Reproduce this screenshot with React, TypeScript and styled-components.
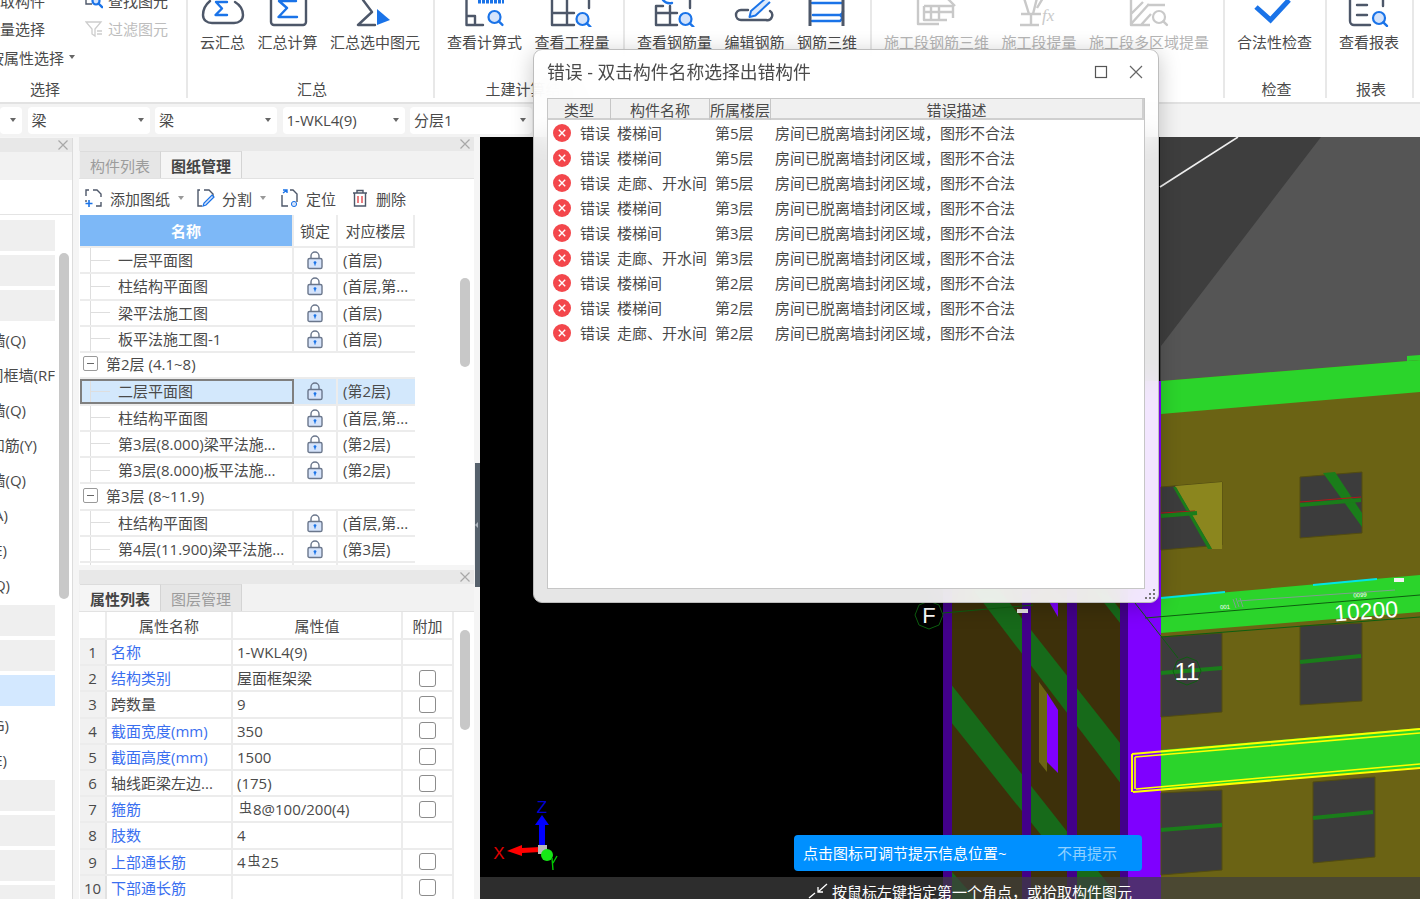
import React from "react";
import styled, { createGlobalStyle } from "styled-components";

const Global = createGlobalStyle`
  html, body { margin: 0; padding: 0; background: #f5f5f5; }
  body { font-family: "Open Sans", "Noto Sans CJK SC", "Noto Sans", sans-serif; font-size: 15px; color: #4a4a4a; }
  * { box-sizing: border-box; }
`;

const GRAY = "#4d5769";
const BLUE = "#1a73e8";
const OFF = "#c9c9c9";

const Page = styled.div`
  position: relative;
  width: 1420px;
  height: 899px;
  overflow: hidden;
  display: flex;
  flex-direction: column;
  background: #f5f5f5;
`;

/* ---------- ribbon ---------- */
const Ribbon = styled.div`
  height: 104px;
  flex: none;
  display: flex;
  background: #fff;
  border-bottom: 2px solid #e2e2e2;
  overflow: hidden;
`;
const Group = styled.div<{ $w?: number }>`
  flex: none;
  width: ${(p) => (p.$w ? `${p.$w}px` : "auto")};
  height: 98px;
  padding: 0 12px;
  display: flex;
  flex-direction: column;
  border-right: 2px solid #e8e8e8;
`;
const SelectGroup = styled(Group)`
  padding: 0;
`;
const GroupBody = styled.div`
  height: 52px;
  flex: none;
  display: flex;
  gap: 12.5px;
`;
const SelectBody = styled.div`
  height: 52px;
  flex: none;
  display: flex;
  align-items: flex-start;
  gap: 7px;
`;
const GroupLabel = styled.div`
  margin-top: auto;
  height: 18px;
  padding-left: 3px;
  line-height: 18px;
  text-align: center;
  white-space: nowrap;
`;
const SelectLabel = styled(GroupLabel)`
  width: 90px;
  padding-left: 0;
`;
const Tool = styled.div<{ $off?: boolean }>`
  display: flex;
  flex-direction: column;
  align-items: center;
  white-space: nowrap;
  color: ${(p) => (p.$off ? "#b5b5b5" : "#4a4a4a")};
`;
const ToolIcon = styled.svg`
  display: block;
  width: 44px;
  height: 27px;
  flex: none;
`;
const ToolText = styled.span`
  margin-top: 6px;
  line-height: 18px;
`;
const SelectCol = styled.div<{ $w: number }>`
  width: ${(p) => p.$w}px;
  flex: none;
  margin-top: -14px;
  display: flex;
  flex-direction: column;
  overflow: hidden;
`;
const SelectRow = styled.div<{ $end?: number; $off?: boolean }>`
  height: 28.5px;
  flex: none;
  display: flex;
  align-items: center;
  justify-content: ${(p) => (p.$end !== undefined ? "flex-end" : "flex-start")};
  padding-right: ${(p) => p.$end ?? 0}px;
  gap: 5px;
  white-space: nowrap;
  color: ${(p) => (p.$off ? "#bdbdbd" : "#4a4a4a")};
  & > span { flex: none; }
`;
const MiniIcon = styled.svg`
  width: 18px;
  height: 18px;
  flex: none;
`;
const Caret = styled.i<{ $c?: string }>`
  display: block;
  flex: none;
  width: 0;
  height: 0;
  border-left: 3.5px solid transparent;
  border-right: 3.5px solid transparent;
  border-top: 4px solid ${(p) => p.$c ?? "#666"};
`;

/* ---------- combo bar ---------- */
const ComboBar = styled.div`
  height: 33px;
  flex: none;
  display: flex;
  align-items: center;
  gap: 5.5px;
  background: #f3f3f3;
`;
const Combo = styled.div<{ $w: number }>`
  width: ${(p) => p.$w}px;
  height: 27px;
  flex: none;
  display: flex;
  align-items: center;
  justify-content: space-between;
  padding: 0 6px 2px 4px;
  background: #fff;
  border-radius: 4px;
  white-space: nowrap;
`;

/* ---------- main ---------- */
const Main = styled.div`
  flex: 1;
  min-height: 0;
  display: flex;
`;
const LeftPane = styled.div`
  width: 73px;
  flex: none;
  margin-top: 1px;
  display: flex;
  flex-direction: column;
  background: #fff;
  border-right: 1px solid #dcdcdc;
  overflow: hidden;
`;
const TitleStrip = styled.div`
  height: 14px;
  flex: none;
  display: flex;
  align-items: center;
  justify-content: flex-end;
  padding-right: 4px;
  background: #e8e8e8;
`;
const CloseMark = styled.svg`
  width: 10px;
  height: 10px;
  flex: none;
`;
const GreyStrip = styled.div`
  height: 28px;
  flex: none;
  background: #f2f2f2;
`;
const BlankStrip = styled.div`
  height: 35px;
  flex: none;
  border-bottom: 1px solid #e4e4e4;
`;
const LeftBody = styled.div`
  display: flex;
  flex: 1;
  min-height: 0;
`;
const LeftList = styled.div`
  width: 55px;
  flex: none;
  padding-top: 5px;
  display: flex;
  flex-direction: column;
  overflow: hidden;
`;
const Block = styled.div<{ $on?: boolean }>`
  height: 31px;
  flex: none;
  margin-bottom: 4px;
  background: ${(p) => (p.$on ? "#d3e8ff" : "#efefef")};
`;
const TextItem = styled.div<{ $end: number }>`
  height: 35px;
  flex: none;
  display: flex;
  align-items: center;
  justify-content: flex-end;
  padding: 0 ${(p) => p.$end}px 7px 0;
  white-space: nowrap;
  & > span { flex: none; }
`;
const LeftTrack = styled.div`
  flex: 1;
  padding: 38px 0 0 4px;
`;
const Thumb = styled.div<{ $h: number; $top?: number; $left?: number }>`
  width: 10px;
  height: ${(p) => p.$h}px;
  margin-top: ${(p) => p.$top ?? 0}px;
  margin-left: ${(p) => p.$left ?? 0}px;
  background: #c8c8c8;
  border-radius: 5px;
`;

const MidCol = styled.div`
  width: 395px;
  flex: none;
  margin-left: 6px;
  display: flex;
  flex-direction: column;
`;
const Panel = styled.div<{ $h: number; $mt?: number }>`
  height: ${(p) => p.$h}px;
  margin-top: ${(p) => p.$mt ?? 0}px;
  flex: none;
  display: flex;
  flex-direction: column;
  background: #fff;
  overflow: hidden;
`;
const TabRow = styled.div`
  height: 28px;
  flex: none;
  display: flex;
  padding-left: 1px;
  background: #f2f2f2;
  border-bottom: 1px solid #e2e2e2;
`;
const Tab = styled.div<{ $on?: boolean }>`
  width: 81px;
  flex: none;
  display: flex;
  align-items: center;
  justify-content: center;
  font-weight: ${(p) => (p.$on ? 700 : 400)};
  color: ${(p) => (p.$on ? "#444" : "#9c9c9c")};
  background: ${(p) => (p.$on ? "#f5f5f5" : "#e6e6e6")};
  border-right: 1px solid #d4d4d4;
  border-top: 1px solid #dcdcdc;
`;
const ActionBar = styled.div`
  height: 36px;
  flex: none;
  display: flex;
  align-items: center;
  padding: 2px 0 0 6px;
`;
const Action = styled.div<{ $mr: number; $ml?: number }>`
  display: flex;
  align-items: center;
  gap: 7px;
  margin-left: ${(p) => p.$ml ?? 0}px;
  margin-right: ${(p) => p.$mr}px;
  white-space: nowrap;
`;
const PanelBody = styled.div`
  flex: 1;
  min-height: 0;
  display: flex;
  overflow: hidden;
`;
const Sheet = styled.div<{ $w: number }>`
  width: ${(p) => p.$w}px;
  flex: none;
  margin-left: 1px;
  display: flex;
  flex-direction: column;
`;
const TreeGrid = styled.div<{ $h?: number }>`
  height: ${(p) => p.$h ?? 26.27}px;
  flex: none;
  display: grid;
  grid-template-columns: 214px 44px 77px;
  border-bottom: 2px solid #ececec;
`;
const Head = styled.div<{ $on?: boolean }>`
  display: flex;
  align-items: center;
  justify-content: center;
  white-space: nowrap;
  border-right: 2px solid #ececec;
  color: ${(p) => (p.$on ? "#fff" : "#4a4a4a")};
  font-weight: ${(p) => (p.$on ? 700 : 400)};
  background: ${(p) => (p.$on ? "#7db8f7" : "#fff")};
`;
const NameCell = styled.div<{ $sel?: boolean }>`
  padding-left: 38px;
  line-height: 24px;
  white-space: nowrap;
  overflow: hidden;
  border-right: 2px solid #ececec;
  background:
    linear-gradient(#dedede, #dedede) 10px 0 / 1px 100% no-repeat,
    linear-gradient(#dedede, #dedede) 10px 50% / 20px 1px no-repeat,
    ${(p) => (p.$sel ? "#d3e8fc" : "#fff")};
  ${(p) => (p.$sel ? "outline: 2px solid #7f7f7f; outline-offset: -2px; line-height: 24px;" : "")}
`;
const LockCell = styled.div<{ $sel?: boolean }>`
  display: flex;
  align-items: center;
  justify-content: center;
  border-right: 2px solid #ececec;
  background: ${(p) => (p.$sel ? "#d3e8fc" : "#fff")};
`;
const FloorCell = styled.div<{ $sel?: boolean }>`
  padding-left: 5px;
  line-height: 24px;
  white-space: nowrap;
  overflow: hidden;
  background: ${(p) => (p.$sel ? "#d3e8fc" : "#fff")};
`;
const FolderRow = styled.div`
  height: 26.27px;
  flex: none;
  display: flex;
  align-items: center;
  gap: 8px;
  padding: 0 0 3px 3px;
  white-space: nowrap;
  border-bottom: 2px solid #ececec;
`;
const Minus = styled.div`
  width: 15px;
  height: 15px;
  flex: none;
  border: 1px solid #9a9a9a;
  border-radius: 2px;
  display: flex;
  align-items: center;
  justify-content: center;
  &::after {
    content: "";
    width: 7px;
    height: 1px;
    background: #666;
  }
`;
const Track = styled.div<{ $w: number }>`
  width: ${(p) => p.$w}px;
  flex: none;
`;

const PropGrid = styled.div<{ $h?: number }>`
  height: ${(p) => p.$h ?? 26.2}px;
  flex: none;
  display: grid;
  grid-template-columns: 27px 126px 170px 51px;
  border-bottom: 2px solid #ececec;
`;
const PropHead = styled.div`
  display: flex;
  align-items: center;
  justify-content: center;
  border-right: 2px solid #ececec;
`;
const PropIndex = styled.div`
  display: flex;
  align-items: center;
  justify-content: center;
  background: #f1f1f1;
  border-right: 2px solid #e2e2e2;
`;
const PropName = styled.div<{ $link?: boolean }>`
  padding-left: 4px;
  line-height: 24px;
  white-space: nowrap;
  overflow: hidden;
  color: ${(p) => (p.$link ? "#3a6ff0" : "#4a4a4a")};
  border-right: 2px solid #ececec;
`;
const PropValue = styled(PropName)`
  color: #4a4a4a;
`;
const Rebar = styled.span`
  font-size: 13px;
  position: relative;
  top: -3px;
  margin: 0 1px 0 2px;
`;
const PropCheck = styled.div`
  display: flex;
  align-items: center;
  justify-content: center;
  border-right: 2px solid #ececec;
`;
const Box = styled.div`
  width: 17px;
  height: 17px;
  border: 1px solid #8c8c8c;
  border-radius: 3px;
  background: #fff;
`;

const Gutter = styled.div`
  width: 6px;
  flex: none;
  background: #f5f5f5;
  padding-top: 326px;
`;
const Handle = styled.div`
  height: 124px;
  margin-left: 1px;
  background: #56616c;
  display: flex;
  align-items: center;
  &::after {
    content: "";
    border-right: 3px solid #aab2ba;
    border-top: 3px solid transparent;
    border-bottom: 3px solid transparent;
  }
`;

/* ---------- canvas ---------- */
const Canvas = styled.div`
  position: relative;
  flex: 1;
  background: #000;
  overflow: hidden;
`;
const Scene = styled.svg`
  display: block;
  width: 940px;
  height: 762px;
`;
const Tip = styled.div`
  position: absolute;
  left: 314px;
  top: 698px;
  width: 348px;
  height: 36px;
  padding: 0 25px 2px 9px;
  display: flex;
  align-items: center;
  justify-content: space-between;
  background: #0090ff;
  border-radius: 4px;
  color: #fff;
`;
const TipMute = styled.span`
  color: #8fd0ff;
`;
const StatusBar = styled.div`
  position: absolute;
  left: 0;
  right: 0;
  bottom: 0;
  height: 22px;
  padding: 6px 0 0 328px;
  display: flex;
  gap: 4px;
  background: rgba(62, 62, 62, 0.72);
  color: #fff;
  line-height: 18px;
  white-space: nowrap;
`;
const StatusIcon = styled.svg`
  width: 20px;
  height: 16px;
  flex: none;
`;

/* ---------- dialog ---------- */
const Dialog = styled.div`
  position: absolute;
  left: 533px;
  top: 49px;
  width: 626px;
  height: 554px;
  padding: 0 13px 13px;
  display: flex;
  flex-direction: column;
  background: rgba(255, 255, 255, 0.9);
  backdrop-filter: blur(14px);
  border: 1px solid #bdbdbd;
  border-radius: 9px;
  box-shadow: 0 4px 22px rgba(0, 0, 0, 0.22);
`;
const DialogHead = styled.div`
  height: 48px;
  flex: none;
  display: flex;
  align-items: center;
  padding: 0 1px 4px 0;
`;
const DialogTitle = styled.span`
  flex: 1;
  font-size: 17.8px;
  line-height: 24px;
`;
const WinBtn = styled.svg<{ $ml: number }>`
  width: 16px;
  height: 16px;
  margin-left: ${(p) => p.$ml}px;
  flex: none;
`;
const ErrTable = styled.div`
  flex: 1;
  min-height: 0;
  display: flex;
  flex-direction: column;
  background: #fff;
  border: 1px solid #c6c6c6;
`;
const ErrHead = styled.div`
  height: 21px;
  flex: none;
  display: grid;
  grid-template-columns: 63px 99px 61px 1fr;
  background: #f0f0f0;
  border-bottom: 2px solid #cfcfcf;
  border-right: 2px solid #cfcfcf;
`;
const ErrHeadCell = styled.div`
  display: flex;
  align-items: center;
  justify-content: center;
  white-space: nowrap;
  border-right: 1px solid #c6c6c6;
  &:last-child { border-right: none; }
`;
const ErrRow = styled.div`
  height: 25px;
  flex: none;
  display: grid;
  grid-template-columns: 32px 37px 98px 60px 1fr;
  align-items: center;
  white-space: nowrap;
`;
const ErrMark = styled.svg`
  width: 18px;
  height: 18px;
  margin-left: 5px;
  display: block;
`;
const Grip = styled.svg`
  position: absolute;
  right: 2px;
  bottom: 2px;
  width: 12px;
  height: 12px;
`;

/* ---------- icons ---------- */
const line = { fill: "none", stroke: GRAY, strokeWidth: 2.4, strokeLinecap: "round" as const, strokeLinejoin: "round" as const };
const blue = { fill: "none", stroke: BLUE, strokeWidth: 2.4, strokeLinecap: "round" as const, strokeLinejoin: "round" as const };
const off = { fill: "none", stroke: OFF, strokeWidth: 2.4, strokeLinejoin: "round" as const };

const Lens = ({ x, y, r = 6, c = BLUE, fill = "#d4e3fb" }: { x: number; y: number; r?: number; c?: string; fill?: string }) => (
  <>
    <circle cx={x} cy={y} r={r} fill={fill} stroke={c} strokeWidth={2.2} />
    <path d={`M${x + r * 0.72} ${y + r * 0.72}l3.6 3.6`} stroke={c} strokeWidth={2.4} strokeLinecap="round" />
  </>
);

const ICONS: Record<string, React.ReactNode> = {
  cloud: (
    <>
      <path {...line} d="M9 1C3 6 2 11 2 15c0 5 4 8 9 8h22c5 0 9-3 9-8 0-5-3-10-8-13" />
      <path {...blue} d="M26 2H15l6 6.5L14.5 15H26" />
    </>
  ),
  sum: (
    <>
      <path {...line} d="M5 -2V22a3 3 0 0 0 3 3H37a3 3 0 0 0 3-3V-2" />
      <path {...blue} d="M30 1H13l8 7-8.5 9H31" />
    </>
  ),
  sumSel: (
    <>
      <path {...line} d="M10 0L19 12 5 25H22" />
      <path fill={BLUE} d="M24 9L37 20 24 25Z" />
    </>
  ),
  calc: (
    <>
      <path {...line} d="M3.5 -2V25H20M3.5 16H12V25" />
      <path stroke={BLUE} strokeWidth={4} strokeDasharray="3 1" d="M15 1.5H41" />
      <Lens x={31.5} y={17} />
    </>
  ),
  qty: (
    <>
      <path {...line} d="M2 -2V25H24M2 13H24M17 -2V25M39 -2V8" />
      <Lens x={32.5} y={19} />
    </>
  ),
  steel: (
    <>
      <path {...line} d="M3 6V25H24M3 13H24M17 6V25M37 -2V8M3 6H10" />
      <path {...blue} d="M10 0q3 4 9 3" />
      <Lens x={32.5} y={19} />
    </>
  ),
  edit: (
    <>
      <path {...line} d="M15 10H8a5 5 0 0 0 0 10H33a5 5 0 0 0 4-9" />
      <path d="M33 -2L18 11l-1.5 6 6-1.5L37 2" fill="#dbe8fb" stroke={BLUE} strokeWidth={2} strokeLinejoin="round" />
    </>
  ),
  ladder: (
    <>
      <path {...blue} d="M7 3H37M8 15H35q4 3 0 6H7M35 15q3-1 3-4" />
      <path fill="none" stroke={GRAY} strokeWidth={3} d="M5 -2V26M38 -2V26" />
    </>
  ),
  seg3d: (
    <>
      <path {...off} d="M3 0V24H24M9 6V20H32M9 6H38V18M16 6V20M24 6V20M9 12H38M32 -2L40 6" />
    </>
  ),
  fx: (
    <>
      <path {...off} d="M4 14H24M3 25H22M14 14V25M7 -2L12 14M20 -2L16 14M26 -2L20 8" />
      <text x="25" y="21" fontFamily="Liberation Serif, serif" fontStyle="italic" fontSize="17" fill={OFF}>fx</text>
    </>
  ),
  multi: (
    <>
      <path {...off} d="M4 -2V25H23M4 14L16 2M4 24L22 4M14 25L24 14M20 5H38" />
      <Lens x={32} y={17} c={OFF} fill="#fff" />
    </>
  ),
  check: <path fill="none" stroke={BLUE} strokeWidth={5} d="M3 7L17.5 20 36 0" />,
  report: (
    <>
      <path {...line} d="M3 -2V21a4 4 0 0 0 4 4H23M36 -2V6M10 5H20M10 15H20" />
      <Lens x={32} y={18} />
    </>
  ),
};

const Tool1 = ({ icon, label, off: isOff }: { icon: string; label: string; off?: boolean }) => (
  <Tool $off={isOff}>
    <ToolIcon viewBox="0 0 44 27">{ICONS[icon]}</ToolIcon>
    <ToolText>{label}</ToolText>
  </Tool>
);

const Strip = () => (
  <TitleStrip>
    <CloseMark viewBox="0 0 10 10">
      <path d="M0.5 0.5l9 9M9.5 0.5l-9 9" stroke="#a8a8a8" strokeWidth="1.2" />
    </CloseMark>
  </TitleStrip>
);

const Lock = () => (
  <svg width="16" height="20" viewBox="0 0 16 20">
    <path d="M4 9V6a4 4 0 0 1 8 0v3" fill="none" stroke="#6a768b" strokeWidth="1.4" />
    <rect x="1" y="8.5" width="14" height="10" rx="1.6" fill="#d5e3fa" stroke="#6a768b" strokeWidth="1.4" />
    <circle cx="8" cy="12.6" r="1.4" fill={BLUE} />
    <path d="M8 13v2.6" stroke={BLUE} strokeWidth="1.2" />
  </svg>
);

const ErrIcon = () => (
  <ErrMark viewBox="0 0 18 18">
    <circle cx="9" cy="9" r="9" fill="#f3474c" />
    <path d="M5.8 5.8l6.4 6.4M12.2 5.8l-6.4 6.4" stroke="#fff" strokeWidth="1.4" />
  </ErrMark>
);

/* ---------- data ---------- */
type TreeItem = { t: "file"; n: string; f: string; sel?: boolean } | { t: "folder"; n: string };
const TREE: TreeItem[] = [
  { t: "file", n: "一层平面图", f: "(首层)" },
  { t: "file", n: "柱结构平面图", f: "(首层,第..." },
  { t: "file", n: "梁平法施工图", f: "(首层)" },
  { t: "file", n: "板平法施工图-1", f: "(首层)" },
  { t: "folder", n: "第2层 (4.1~8)" },
  { t: "file", n: "二层平面图", f: "(第2层)", sel: true },
  { t: "file", n: "柱结构平面图", f: "(首层,第..." },
  { t: "file", n: "第3层(8.000)梁平法施...", f: "(第2层)" },
  { t: "file", n: "第3层(8.000)板平法施...", f: "(第2层)" },
  { t: "folder", n: "第3层 (8~11.9)" },
  { t: "file", n: "柱结构平面图", f: "(首层,第..." },
  { t: "file", n: "第4层(11.900)梁平法施...", f: "(第3层)" },
  { t: "file", n: "", f: "" },
];

const PROPS: { n: string; v: React.ReactNode; link?: boolean; box?: boolean }[] = [
  { n: "名称", v: "1-WKL4(9)", link: true },
  { n: "结构类别", v: "屋面框架梁", link: true, box: true },
  { n: "跨数量", v: "9", box: true },
  { n: "截面宽度(mm)", v: "350", link: true, box: true },
  { n: "截面高度(mm)", v: "1500", link: true, box: true },
  { n: "轴线距梁左边...", v: "(175)", box: true },
  { n: "箍筋", v: <><Rebar>虫</Rebar>8@100/200(4)</>, link: true, box: true },
  { n: "肢数", v: "4", link: true },
  { n: "上部通长筋", v: <>4<Rebar>虫</Rebar>25</>, link: true, box: true },
  { n: "下部通长筋", v: "", link: true, box: true },
];

const ERRORS: [string, string][] = [
  ["楼梯间", "第5层"], ["楼梯间", "第5层"], ["走廊、开水间", "第5层"],
  ["楼梯间", "第3层"], ["楼梯间", "第3层"], ["走廊、开水间", "第3层"],
  ["楼梯间", "第2层"], ["楼梯间", "第2层"], ["走廊、开水间", "第2层"],
];

const LEFT: ({ b: boolean; on?: boolean } | { s: string; e: number })[] = [
  { b: true }, { b: true }, { b: true },
  { s: "剪力墙(Q)", e: 29 }, { s: "人防门框墙(RF", e: 0 }, { s: "砌体墙(Q)", e: 29 },
  { s: "砌体加筋(Y)", e: 18 }, { s: "保温墙(Q)", e: 29 }, { s: "暗梁(A)", e: 47 },
  { s: "墙垛(E)", e: 48 }, { s: "幕墙(Q)", e: 45 },
  { b: true }, { b: true }, { b: true, on: true },
  { s: "过梁(G)", e: 46 }, { s: "压顶(E)", e: 48 },
  { b: true }, { b: true }, { b: true }, { b: true },
];

const COMBOS: [number, string][] = [[22, ""], [122, "梁"], [122, "梁"], [122, "1-WKL4(9)"], [122, "分层1"]];

const Scene3D = () => (
  <Scene viewBox="480 137 940 762">
    <rect x="1160" y="137" width="260" height="250" fill="#3e3e3e" />
    <path fill="#555" d="M1321 137H1420V365L1161 385V346Z" />
    <path stroke="#eee" strokeWidth="1.6" d="M1160 187L1238 137" />

    {/* wall behind the dialog */}
    <path fill="#3d300a" d="M943 400H1128V899H943Z" />
    <g fill="#176a1a">
      <path d="M943 674L1128 909V899H1092L943 712Z" />
      <path d="M975 559L1128 753V793L975 592Z" />
      <path d="M1090 570L1128 620V633L1090 585Z" />
      <path d="M952 872L976 899H952Z" />
      <path d="M1077 872L1098 899H1077Z" />
    </g>
    <path fill="#6b6314" d="M1039 682L1047 693V772L1039 762Z" />
    <path fill="#7f00ff" d="M1047 693L1058 710V773L1047 762Z" />
    <path fill="#7f00ff" d="M1048 600H1058V617Z" />
    <g fill="#42008a">
      <rect x="943" y="400" width="9" height="499" />
      <rect x="1022" y="400" width="9" height="499" />
      <rect x="1067" y="400" width="10" height="499" />
      <rect x="1120" y="400" width="8" height="499" />
    </g>
    <rect x="1128" y="381" width="33" height="518" fill="#7f00ff" />

    {/* front wall */}
    <path fill="#6b6314" d="M1161 381L1420 360V899H1161Z" />
    <path fill="#2bd42b" d="M1161 381L1420 360V392L1161 414Z" />
    <path fill="#2bd42b" d="M1407 356L1420 355V360L1407 361Z" />
    <path fill="#2bd42b" d="M1161 598L1420 575V612L1161 633Z" />

    <g fill="#3c3c3c" stroke="#524c10" strokeWidth="1">
      <path d="M1161 487L1222 482V545L1161 550Z" />
      <path d="M1300 477L1362 472V533L1300 538Z" />
      <path d="M1161 637L1222 633V712L1161 717Z" />
      <path d="M1300 626L1362 623V701L1300 705Z" />
      <path d="M1161 793L1222 790V870L1161 875Z" />
      <path d="M1313 782L1375 777V857L1313 863Z" />
    </g>
    <path fill="#8b861e" d="M1175 486L1222 482V549H1212Z" />
    <path fill="#1a7d1a" d="M1173 487L1176 487L1212 549H1208Z" />
    <path fill="#1a7d1a" d="M1323 473L1335 472L1362 513V527Z" />
    <path stroke="#b01818" strokeWidth="1" d="M1161 513L1195 511M1300 502L1361 497" />
    <path stroke="#1a7d1a" strokeWidth="4" d="M1161 516L1197 513M1300 505L1361 500" />
    <path stroke="#1a7d1a" strokeWidth="4" d="M1161 673L1222 668M1300 662L1361 656M1161 830L1222 825M1313 818L1373 812" />

    {/* selected beam */}
    <path fill="#2bd42b" d="M1161 750L1420 728V767L1161 790Z" />
    <path fill="none" stroke="#ffff00" strokeWidth="2" d="M1132 754L1420 729M1133 792L1420 768M1132 754V792" />
    <path fill="none" stroke="#ffff00" strokeWidth="1.6" d="M1135 757L1420 733M1136 789L1420 764M1135 757V789" />

    {/* dimension lines */}
    <g stroke="#0d5f10" strokeWidth="1" fill="none">
      <path d="M1135 603L1178 658M1145 618L1420 595M1161 637L1420 617M943 613L1033 605" />
      <path d="M929 601l10 4 4 10-4 10-10 4-10-4-4-10 4-10z" />
      <path d="M1187 657l10 4 4 10-4 10-10 4-10-4-4-10 4-10z" />
    </g>
    <path stroke="#00e5e5" strokeWidth="2" d="M1161 598L1225 592M1313 585L1377 579" />
    <path stroke="#7da08f" strokeWidth="1" d="M1238 601L1395 590M1236 598l3 9M1240 598l3 9M1233 599l3 9" />
    <rect x="1394" y="578" width="10" height="4" fill="#f2f2f2" />
    <rect x="1017" y="609" width="11" height="4" fill="#e6e6e6" />
    <g fill="#fff" fontFamily="Liberation Sans, sans-serif">
      <text x="929" y="623" fontSize="22" textAnchor="middle">F</text>
      <text x="1187" y="680" fontSize="24" textAnchor="middle">11</text>
      <text x="1366" y="619" fontSize="23" textAnchor="middle" transform="rotate(-4 1366 611)">10200</text>
      <text x="1225" y="609" fontSize="6" textAnchor="middle" transform="rotate(-4 1225 607)">001</text>
      <text x="1360" y="597" fontSize="6" textAnchor="middle" transform="rotate(-4 1360 595)">0099</text>
    </g>

    {/* axis */}
    <path fill="#0000ff" d="M539 845V825H535L542 815 549 825H545V845Z" />
    <path fill="#ff0000" d="M540 847L522 848V845L507 851 522 856V853L540 852Z" />
    <rect x="538" y="845" width="9" height="9" fill="#b9b9b9" />
    <circle cx="547" cy="855" r="6" fill="#16e816" />
    <path stroke="#00c800" strokeWidth="1.4" fill="none" d="M552 858L553 870M553 863L557 856" />
    <g fontFamily="Liberation Sans, sans-serif" fontSize="17">
      <text x="542" y="813" textAnchor="middle" fill="#0000d0">Z</text>
      <text x="499" y="859" textAnchor="middle" fill="#e00000">X</text>
    </g>
  </Scene>
);

export default function App() {
  return (
    <Page>
      <Global />
      <Ribbon>
        <SelectGroup $w={188}>
          <SelectBody>
            <SelectCol $w={78}>
              <SelectRow $end={33}><span>选取构件</span></SelectRow>
              <SelectRow $end={33}><span>批量选择</span></SelectRow>
              <SelectRow $end={3}><span>按属性选择</span><Caret /></SelectRow>
            </SelectCol>
            <SelectCol $w={90}>
              <SelectRow>
                <MiniIcon viewBox="0 0 18 18">
                  <path d="M1 4v9h6M1 8h6" fill="none" stroke={GRAY} strokeWidth="1.4" />
                  <Lens x={11} y={10} r={3.5} />
                </MiniIcon>
                <span>查找图元</span>
              </SelectRow>
              <SelectRow $off>
                <MiniIcon viewBox="0 0 18 18">
                  <path d="M1 2h15l-6 7v7l-3-2V9zM12 11h5M12 14h5" fill="none" stroke="#cdcdcd" strokeWidth="1.3" />
                </MiniIcon>
                <span>过滤图元</span>
              </SelectRow>
            </SelectCol>
          </SelectBody>
          <SelectLabel>选择</SelectLabel>
        </SelectGroup>
        <Group $w={247}>
          <GroupBody>
            <Tool1 icon="cloud" label="云汇总" />
            <Tool1 icon="sum" label="汇总计算" />
            <Tool1 icon="sumSel" label="汇总选中图元" />
          </GroupBody>
          <GroupLabel>汇总</GroupLabel>
        </Group>
        <Group $w={190}>
          <GroupBody>
            <Tool1 icon="calc" label="查看计算式" />
            <Tool1 icon="qty" label="查看工程量" />
          </GroupBody>
          <GroupLabel>土建计算结果</GroupLabel>
        </Group>
        <Group $w={247}>
          <GroupBody>
            <Tool1 icon="steel" label="查看钢筋量" />
            <Tool1 icon="edit" label="编辑钢筋" />
            <Tool1 icon="ladder" label="钢筋三维" />
          </GroupBody>
        </Group>
        <Group $w={353}>
          <GroupBody>
            <Tool1 off icon="seg3d" label="施工段钢筋三维" />
            <Tool1 off icon="fx" label="施工段提量" />
            <Tool1 off icon="multi" label="施工段多区域提量" />
          </GroupBody>
        </Group>
        <Group $w={102}>
          <GroupBody>
            <Tool1 icon="check" label="合法性检查" />
          </GroupBody>
          <GroupLabel>检查</GroupLabel>
        </Group>
        <Group $w={87}>
          <GroupBody>
            <Tool1 icon="report" label="查看报表" />
          </GroupBody>
          <GroupLabel>报表</GroupLabel>
        </Group>
      </Ribbon>

      <ComboBar>
        {COMBOS.map(([w, s], i) => (
          <Combo key={i} $w={w}>
            <span>{s}</span>
            <Caret />
          </Combo>
        ))}
      </ComboBar>

      <Main>
        <LeftPane>
          <Strip />
          <GreyStrip />
          <BlankStrip />
          <LeftBody>
            <LeftList>
              {LEFT.map((it, i) =>
                "s" in it ? (
                  <TextItem key={i} $end={it.e}><span>{it.s}</span></TextItem>
                ) : (
                  <Block key={i} $on={it.on} />
                )
              )}
            </LeftList>
            <LeftTrack><Thumb $h={346} /></LeftTrack>
          </LeftBody>
        </LeftPane>

        <MidCol>
          <Panel $h={428}>
            <Strip />
            <TabRow>
              <Tab>构件列表</Tab>
              <Tab $on>图纸管理</Tab>
            </TabRow>
            <ActionBar>
              <Action $mr={8}>
                <MiniIcon viewBox="0 0 18 18">
                  <path d="M4 1H1v6M8 1h4l4 4v3M16 13v4h-5M1 11v2" fill="none" stroke={GRAY} strokeWidth="1.4" />
                  <path d="M4 11v7M0.5 14.5h7" stroke={BLUE} strokeWidth="1.6" />
                </MiniIcon>
                添加图纸
              </Action>
              <Caret $c="#999" />
              <Action $mr={8} $ml={13}>
                <MiniIcon viewBox="0 0 18 18">
                  <path d="M3 1H1v16h4M7 1h5l4 4v3" fill="none" stroke={GRAY} strokeWidth="1.4" />
                  <path d="M17 8L9 16l-3 1 1-3 8-8z" fill="#d5e3fa" stroke={BLUE} strokeWidth="1.2" />
                </MiniIcon>
                分割
              </Action>
              <Caret $c="#999" />
              <Action $mr={15} $ml={15}>
                <MiniIcon viewBox="0 0 18 18">
                  <path d="M1 6v11h6M9 1h3l4 4v8" fill="none" stroke={GRAY} strokeWidth="1.4" />
                  <path d="M2 4l4-3M2 1h4v3" fill="none" stroke={BLUE} strokeWidth="1.4" />
                  <circle cx="13" cy="15" r="2.6" fill="#d5e3fa" stroke={BLUE} />
                </MiniIcon>
                定位
              </Action>
              <Action $mr={0}>
                <MiniIcon viewBox="0 0 18 18">
                  <path d="M2 4h14M6 4V1.5h6V4M3.5 4v13h11V4" fill="none" stroke={GRAY} strokeWidth="1.4" />
                  <path d="M7 7v7M11 7v7" stroke="#e0484c" strokeWidth="1.4" />
                </MiniIcon>
                删除
              </Action>
            </ActionBar>
            <PanelBody>
              <Sheet $w={335}>
                <TreeGrid $h={33}>
                  <Head $on>名称</Head>
                  <Head>锁定</Head>
                  <Head>对应楼层</Head>
                </TreeGrid>
                {TREE.map((r, i) =>
                  r.t === "folder" ? (
                    <FolderRow key={i}><Minus />{r.n}</FolderRow>
                  ) : (
                    <TreeGrid key={i}>
                      <NameCell $sel={r.sel}>{r.n}</NameCell>
                      <LockCell $sel={r.sel}>{r.n && <Lock />}</LockCell>
                      <FloorCell $sel={r.sel}>{r.f}</FloorCell>
                    </TreeGrid>
                  )
                )}
              </Sheet>
              <Track $w={59}><Thumb $h={89} $top={63} $left={45} /></Track>
            </PanelBody>
          </Panel>
          <Panel $h={329} $mt={5}>
            <Strip />
            <TabRow>
              <Tab $on>属性列表</Tab>
              <Tab>图层管理</Tab>
            </TabRow>
            <PanelBody>
              <Sheet $w={374}>
                <PropGrid $h={28}>
                  <PropHead />
                  <PropHead>属性名称</PropHead>
                  <PropHead>属性值</PropHead>
                  <PropHead>附加</PropHead>
                </PropGrid>
                {PROPS.map((p, i) => (
                  <PropGrid key={i}>
                    <PropIndex>{i + 1}</PropIndex>
                    <PropName $link={p.link}>{p.n}</PropName>
                    <PropValue>{p.v}</PropValue>
                    <PropCheck>{p.box && <Box />}</PropCheck>
                  </PropGrid>
                ))}
              </Sheet>
              <Track $w={20}><Thumb $h={100} $top={18} $left={6} /></Track>
            </PanelBody>
          </Panel>
        </MidCol>

        <Gutter><Handle /></Gutter>

        <Canvas>
          <Scene3D />
          <Tip>
            <span>点击图标可调节提示信息位置~</span>
            <TipMute>不再提示</TipMute>
          </Tip>
          <StatusBar>
            <StatusIcon viewBox="0 0 20 16">
              <path d="M19 1L10 9M10 4v5h5M1 15l6-5" fill="none" stroke="#fff" strokeWidth="1.3" />
            </StatusIcon>
            <span>按鼠标左键指定第一个角点，或拾取构件图元</span>
          </StatusBar>
        </Canvas>
      </Main>

      <Dialog>
        <DialogHead>
          <DialogTitle>错误 - 双击构件名称选择出错构件</DialogTitle>
          <WinBtn $ml={0} viewBox="0 0 16 16">
            <rect x="2.5" y="2.5" width="11" height="11" fill="none" stroke="#555" strokeWidth="1.2" />
          </WinBtn>
          <WinBtn $ml={19} viewBox="0 0 16 16">
            <path d="M2 2l12 12M14 2L2 14" stroke="#666" strokeWidth="1.2" />
          </WinBtn>
        </DialogHead>
        <ErrTable>
          <ErrHead>
            <ErrHeadCell>类型</ErrHeadCell>
            <ErrHeadCell>构件名称</ErrHeadCell>
            <ErrHeadCell>所属楼层</ErrHeadCell>
            <ErrHeadCell>错误描述</ErrHeadCell>
          </ErrHead>
          {ERRORS.map(([n, f], i) => (
            <ErrRow key={i}>
              <ErrIcon />
              <span>错误</span>
              <span>{n}</span>
              <span>{f}</span>
              <span>房间已脱离墙封闭区域，图形不合法</span>
            </ErrRow>
          ))}
        </ErrTable>
        <Grip viewBox="0 0 12 12" fill="#777">
          <rect x="9" y="1" width="2" height="2" />
          <rect x="5" y="5" width="2" height="2" />
          <rect x="9" y="5" width="2" height="2" />
          <rect x="1" y="9" width="2" height="2" />
          <rect x="5" y="9" width="2" height="2" />
          <rect x="9" y="9" width="2" height="2" />
        </Grip>
      </Dialog>
    </Page>
  );
}
